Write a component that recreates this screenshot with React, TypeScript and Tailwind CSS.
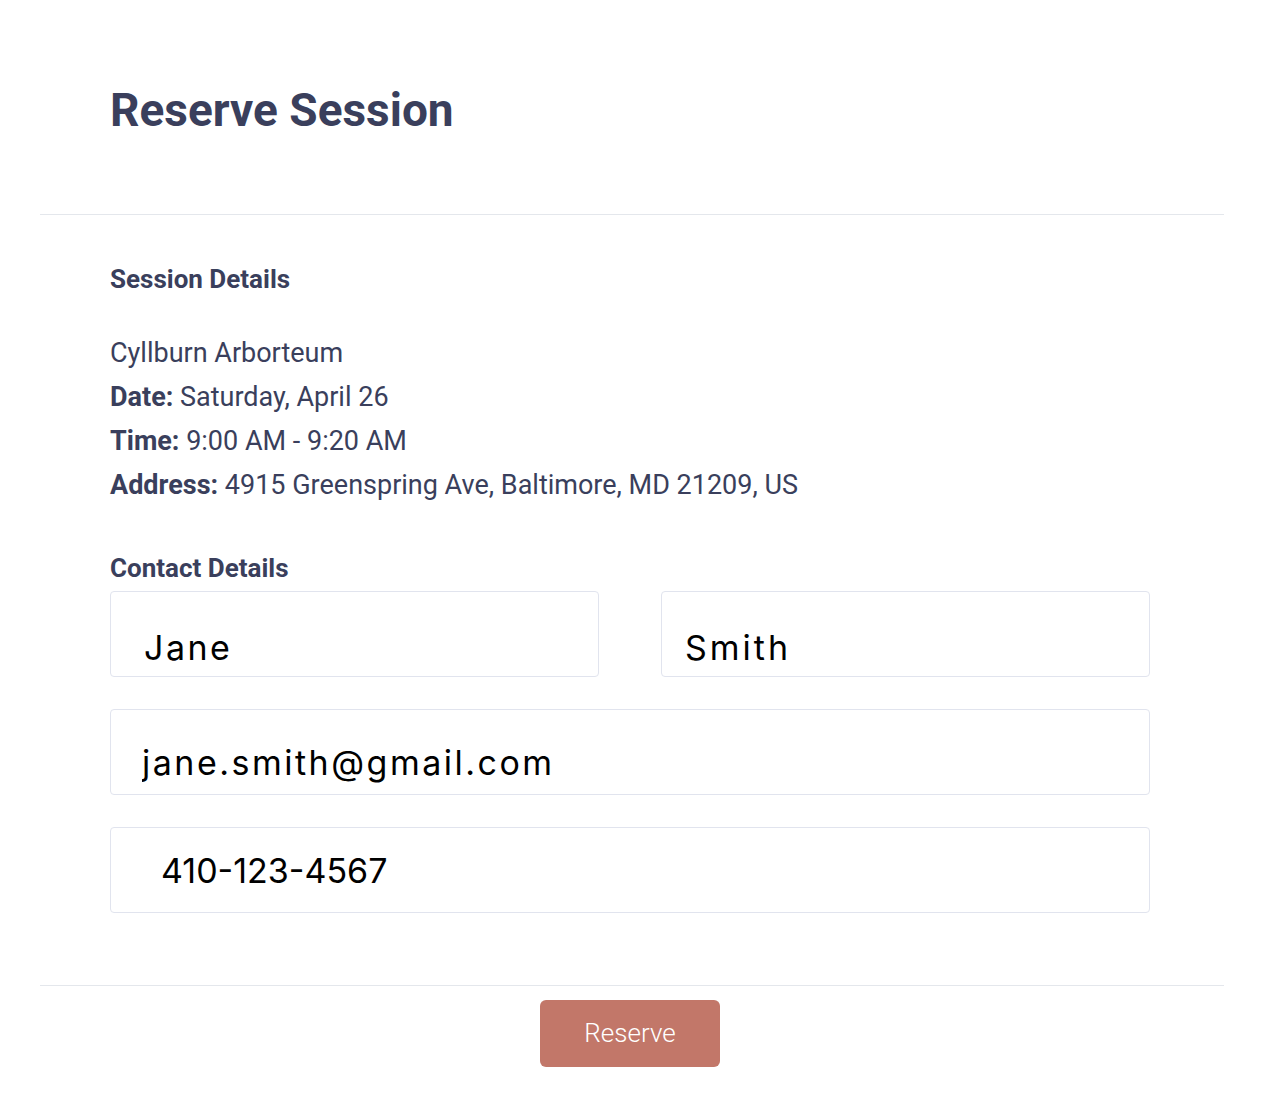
export default function App() {
    const label = "font-['Roboto',sans-serif] text-[#3a3f5c]";
    const field =
        "block w-full bg-white border border-[#e1e4ee] rounded-[4px] font-['Inter',sans-serif] text-[34px] leading-[41px] text-black outline-none";

    return (
        <main className="min-h-screen bg-white">
            <div className="pl-[40px] pr-[46px]">
                <header className="px-[70px] pt-[87px] pb-[81px]">
                    <h1 className={`${label} text-[46px] leading-[46px] font-bold`}>Reserve Session</h1>
                </header>
                <div className="h-px bg-[#e4e7ec]" />

                <section className="px-[70px] pt-[51px]">
                    <h2 className={`${label} text-[26px] leading-[26px] font-bold`}>Session Details</h2>
                    <div className={`${label} mt-[39px] text-[27px] leading-[44px]`}>
                        <p>Cyllburn Arborteum</p>
                        <p><b>Date:</b> Saturday, April 26</p>
                        <p><b>Time:</b> 9:00 AM - 9:20 AM</p>
                        <p><b>Address:</b> 4915 Greenspring Ave, Baltimore, MD 21209, US</p>
                    </div>

                    <h2 className={`${label} mt-[48px] text-[26px] leading-[26px] font-bold`}>Contact Details</h2>
                    <form className="mt-[10px] flex flex-col gap-[32px] w-[1040px]">
                        <div className="grid grid-cols-2 gap-[62px]">
                            <input readOnly value="Jane" className={`${field} tracking-[2.5px] pt-[35px] pb-[8px] pl-[33px]`} />
                            <input readOnly value="Smith" className={`${field} tracking-[3px] pt-[35px] pb-[8px] pl-[23px]`} />
                        </div>
                        <input readOnly value="jane.smith@gmail.com" className={`${field} tracking-[2.5px] pt-[32px] pb-[11px] pl-[31px]`} />
                        <input readOnly value="410-123-4567" className={`${field} pt-[22px] pb-[21px] pl-[50px]`} />
                    </form>
                </section>

                <div className="mt-[72px] h-px bg-[#e4e7ec]" />
                <div className="flex justify-center pr-[4px] pt-[14px] pb-[45px]">
                    <button
                        type="button"
                        className="w-[180px] h-[67px] rounded-[6px] bg-[#c27769] text-white font-['Roboto',sans-serif] font-light text-[26px]"
                    >
                        Reserve
                    </button>
                </div>
            </div>
        </main>
    );
}
